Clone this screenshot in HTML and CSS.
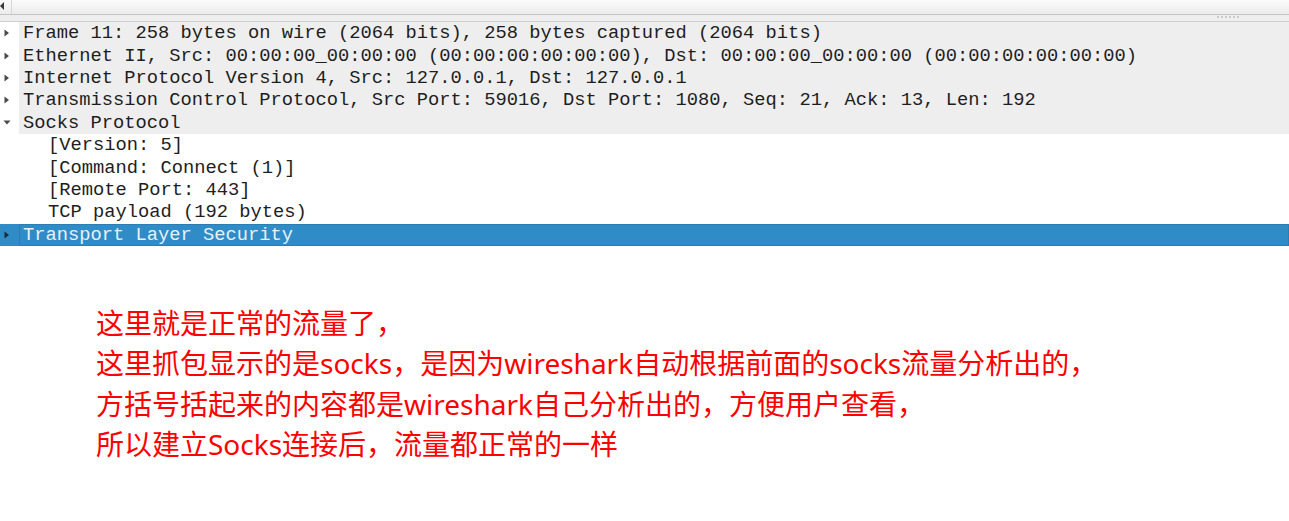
FILE: index.html
```html
<!DOCTYPE html>
<html>
<head>
<meta charset="utf-8">
<link rel="stylesheet" href="styles.css">
</head>
<body>
<div class="toolbar">
  <svg class="back" width="5" height="8" viewBox="0 0 5 8"><path d="M4 0 L0 4 L4 8 Z" fill="#3a3a3a"/></svg>
  <div class="divider"></div>
</div>
<div class="splitter">
  <div class="handle"><i></i><i></i><i></i><i></i><i></i><i></i></div>
</div>
<div class="tree">
  <div class="row top"><span class="arrow"><svg width="6" height="8" viewBox="0 0 6 8"><path d="M0.5 0.5 L5 4 L0.5 7.5 Z" fill="#4a4a4a"/></svg></span><span class="label">Frame 11: 258 bytes on wire (2064 bits), 258 bytes captured (2064 bits)</span></div>
  <div class="row top"><span class="arrow"><svg width="6" height="8" viewBox="0 0 6 8"><path d="M0.5 0.5 L5 4 L0.5 7.5 Z" fill="#4a4a4a"/></svg></span><span class="label">Ethernet II, Src: 00:00:00_00:00:00 (00:00:00:00:00:00), Dst: 00:00:00_00:00:00 (00:00:00:00:00:00)</span></div>
  <div class="row top"><span class="arrow"><svg width="6" height="8" viewBox="0 0 6 8"><path d="M0.5 0.5 L5 4 L0.5 7.5 Z" fill="#4a4a4a"/></svg></span><span class="label">Internet Protocol Version 4, Src: 127.0.0.1, Dst: 127.0.0.1</span></div>
  <div class="row top"><span class="arrow"><svg width="6" height="8" viewBox="0 0 6 8"><path d="M0.5 0.5 L5 4 L0.5 7.5 Z" fill="#4a4a4a"/></svg></span><span class="label">Transmission Control Protocol, Src Port: 59016, Dst Port: 1080, Seq: 21, Ack: 13, Len: 192</span></div>
  <div class="row top"><span class="arrow"><svg width="8" height="5" viewBox="0 0 8 5"><path d="M0.5 0.5 L7.5 0.5 L4 4.5 Z" fill="#4a4a4a"/></svg></span><span class="label">Socks Protocol</span></div>
  <div class="row child"><span class="arrow"></span><span class="label">[Version: 5]</span></div>
  <div class="row child"><span class="arrow"></span><span class="label">[Command: Connect (1)]</span></div>
  <div class="row child"><span class="arrow"></span><span class="label">[Remote Port: 443]</span></div>
  <div class="row child"><span class="arrow"></span><span class="label">TCP payload (192 bytes)</span></div>
  <div class="row selected"><span class="arrow"><svg width="6" height="8" viewBox="0 0 6 8"><path d="M0.5 0.5 L5 4 L0.5 7.5 Z" fill="#1d2a36"/></svg></span><span class="label">Transport Layer Security</span></div>
</div>
<div class="note">
  <p>这里就是正常的流量了，</p>
  <p>这里抓包显示的是socks，是因为wireshark自动根据前面的socks流量分析出的，</p>
  <p>方括号括起来的内容都是wireshark自己分析出的，方便用户查看，</p>
  <p>所以建立Socks连接后，流量都正常的一样</p>
</div>
</body>
</html>
```
FILE: styles.css
```css
html, body {
  margin: 0;
  padding: 0;
  background: #ffffff;
}

.toolbar {
  height: 14px;
  background: linear-gradient(#fbfbfb, #ececec);
  border-bottom: 1px solid #c4c4c4;
  display: flex;
  align-items: center;
}

.back {
  margin-left: 0;
  margin-top: -2px;
}

.divider {
  width: 1px;
  height: 14px;
  margin-left: 6px;
  background: #d6d6d6;
}

.splitter {
  height: 6px;
  background: #eeeeee;
  border-bottom: 1px solid #cfcfcf;
  display: flex;
  justify-content: flex-end;
}

.handle {
  display: flex;
  gap: 2px;
  margin-right: 50px;
  margin-top: 1px;
}

.handle i {
  display: block;
  width: 2px;
  height: 2px;
  background: #cbcbcb;
}

.tree {
  font-family: "Liberation Mono", monospace;
  font-size: 18.75px;
  color: #1e1e1e;
}

.row {
  height: 22.4px;
  display: flex;
  align-items: center;
  white-space: pre;
}

.arrow {
  width: 19px;
  height: 100%;
  flex: none;
  display: flex;
  align-items: center;
  justify-content: flex-start;
  padding-left: 4px;
  box-sizing: border-box;
}

.row.top .label {
  background: #eeeeee;
  flex: 1;
  height: 100%;
  display: flex;
  align-items: center;
  padding-left: 4px;
}

.row.top:nth-child(5) .arrow {
  padding-left: 3px;
}

.row.child .label {
  padding-left: 29px;
}

.row.selected {
  background: #308cc6;
  color: #e6f1fa;
}

.row.selected .label {
  flex: 1;
  height: 100%;
  display: flex;
  align-items: center;
  padding-left: 4px;
  box-shadow: inset 0 0 0 1px #2b7db3;
}

.note {
  margin: 57px 0 0 96px;
  font-family: "Noto Sans", "Noto Sans CJK SC", sans-serif;
  font-size: 28px;
  line-height: 40.5px;
  color: #ff0000;
}

.note p {
  margin: 0;
}
```
